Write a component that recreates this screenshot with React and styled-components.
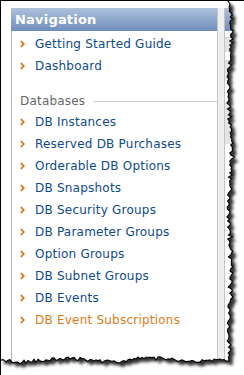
import React from "react";
import styled, { createGlobalStyle } from "styled-components";

const Global = createGlobalStyle`
  html, body { margin: 0; padding: 0; background: #ffffff; }
  body { font-family: "DejaVu Sans", Verdana, sans-serif; }
`;

const Frame = styled.div`
  position: relative;
  width: 244px;
  height: 375px;
  box-sizing: border-box;
  overflow: hidden;
  background: #ffffff;
  border-top: 1px solid #000;
  border-left: 1px solid #000;
  padding: 7px 0 0 10px;
  display: flex;
  align-items: stretch;
`;

const Panel = styled.nav`
  width: 206px;
  display: flex;
  flex-direction: column;
`;

const Header = styled.div`
  height: 23px;
  display: flex;
  align-items: center;
  padding-left: 4px;
  background: linear-gradient(#adc1dc, #6f8ebb);
  color: #ffffff;
  font-weight: bold;
  font-size: 13px;
  letter-spacing: 0.2px;
`;

const Body = styled.div`
  flex: 1;
  border-left: 1px solid #b4b4b4;
  padding-top: 2px;
  display: flex;
  flex-direction: column;
`;

const Item = styled.a`
  height: 22px;
  display: flex;
  align-items: center;
  gap: 10px;
  padding-left: 8px;
  font-size: 12px;
  letter-spacing: 0.22px;
  color: ${(p) => (p.$active ? "#e27a16" : "#0e4a8c")};
  text-decoration: none;
  white-space: nowrap;
`;

const Section = styled.div`
  height: 20px;
  margin-top: 14px;
  display: flex;
  align-items: center;
  gap: 9px;
  padding-left: 8px;
  font-size: 12px;
  letter-spacing: 0.2px;
  color: #666666;
  &::after {
    content: "";
    flex: 1;
    height: 1px;
    background: #cccccc;
  }
`;

const Strip = styled.div`
  width: 6px;
  border-left: 1px solid #c4c4c4;
  border-right: 1px solid #c4c4c4;
  background: #efefef;
`;

const NextPanel = styled.div`
  flex: 1;
  display: flex;
  flex-direction: column;
`;

const NextHeader = styled.div`
  height: 23px;
  background: linear-gradient(#adc1dc, #6f8ebb);
`;

const NextBox = styled.div`
  height: ${(p) => p.$h}px;
  margin-top: ${(p) => p.$m}px;
  background: #e4e4e4;
  border-top: 1px solid #d0d0d0;
`;

const Chevron = () => (
  <svg width="5" height="8" viewBox="0 0 5 8">
    <polyline points="0.8,1 3.8,4 0.8,7" fill="none" stroke="#d46f0c" strokeWidth="1.7" />
  </svg>
);

function rng(seed) {
  let s = seed;
  return () => {
    s = (s * 16807) % 2147483647;
    return (s - 1) / 2147483646;
  };
}

function buildTear() {
  const r = rng(12345);
  const pts = [[225, 0], [228, 1], [230, 4]];
  for (let y = 7; y < 358; y += 2) {
    const x = 230 + 1.6 * Math.sin(y / 19) + (r() - 0.5) * 3.6 + (r() < 0.1 ? (r() - 0.5) * 5 : 0);
    pts.push([x, y]);
  }
  pts.push([229, 361]);
  for (let x = 226; x > 1; x -= 2) {
    const y = 360 + 1.5 * Math.sin(x / 14) + (r() - 0.5) * 3.4 + (r() < 0.1 ? (r() - 0.5) * 5 : 0);
    pts.push([x, y]);
  }
  pts.push([0, 361]);
  return pts;
}

const TEAR = buildTear();
const tearLine = "M" + TEAR.map((p) => p[0].toFixed(1) + "," + p[1].toFixed(1)).join(" L");
const paperPath = "M0,0 " + TEAR.map((p) => "L" + p[0].toFixed(1) + "," + p[1].toFixed(1)).join(" ") + " Z";

const Torn = styled.svg`
  position: absolute;
  left: -1px;
  top: -1px;
  pointer-events: none;
`;

const TornEdge = () => (
  <Torn width="244" height="375" viewBox="0 0 244 375">
    <defs>
      <mask id="outside">
        <rect width="244" height="375" fill="#fff" />
        <path d={paperPath} fill="#000" />
      </mask>
      <filter id="blur" x="-10%" y="-10%" width="120%" height="120%">
        <feGaussianBlur stdDeviation="1.8" />
      </filter>
    </defs>
    <g mask="url(#outside)">
      <rect width="244" height="375" fill="#fff" />
      <path d={paperPath} fill="#333" transform="translate(4,4)" filter="url(#blur)" />
    </g>
    <path d={tearLine} fill="none" stroke="#000" strokeWidth="1.1" />
  </Torn>
);

const top = ["Getting Started Guide", "Dashboard"];
const dbs = [
  "DB Instances",
  "Reserved DB Purchases",
  "Orderable DB Options",
  "DB Snapshots",
  "DB Security Groups",
  "DB Parameter Groups",
  "Option Groups",
  "DB Subnet Groups",
  "DB Events",
  "DB Event Subscriptions",
];

export default function App() {
  return (
    <>
      <Global />
      <Frame>
        <Panel>
          <Header>Navigation</Header>
          <Body>
            {top.map((t) => (
              <Item key={t} href="#">
                <Chevron />
                {t}
              </Item>
            ))}
            <Section>Databases</Section>
            {dbs.map((t, i) => (
              <Item key={t} href="#" $active={i === dbs.length - 1}>
                <Chevron />
                {t}
              </Item>
            ))}
          </Body>
        </Panel>
        <Strip />
        <NextPanel>
          <NextHeader />
          <NextBox $m={6} $h={14} />
          <NextBox $m={8} $h={20} />
          <NextBox $m={22} $h={40} />
        </NextPanel>
        <TornEdge />
      </Frame>
    </>
  );
}
